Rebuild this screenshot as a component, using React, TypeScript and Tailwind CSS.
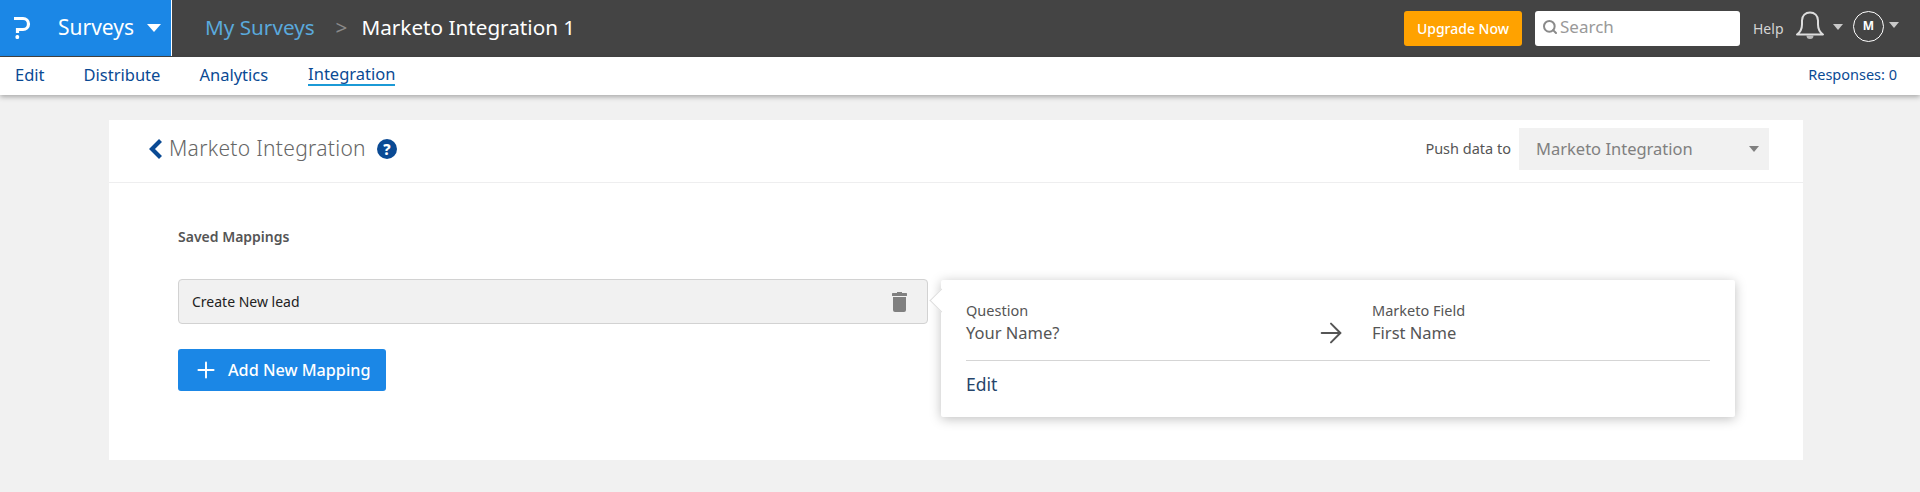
import { Search, Plus, ArrowRight } from "lucide-react";

function Caret({ className }: { className: string }) {
  return <span className={`inline-block h-0 w-0 border-x-transparent ${className}`} />;
}

function TopBar() {
  return (
    <div className="h-[57px] bg-[#444444]">
      <div className="flex h-[56px] items-stretch">
        <div className="flex w-[172px] shrink-0 items-center border-r border-white bg-[#1b87e6] text-white">
          <svg className="ml-[14px] h-[28px] w-[18px]" viewBox="0 0 18 28" fill="none">
            <path d="M0 4.500h9a5.500 5.500 0 0 1 0 11H3.500v3.500" stroke="#fff" strokeWidth="3.200" />
            <rect x="1.500" y="21" width="3.600" height="4" rx="1.500" fill="#fff" />
          </svg>
          <span className="ml-[26px] text-[21px]">Surveys</span>
          <Caret className="ml-[13px] border-x-[7px] border-t-[8px] border-t-white" />
        </div>
        <div className="ml-[33px] flex items-center text-[20.7px]">
          <span className="text-[#5aa9dc]">My Surveys</span>
          <span className="ml-[21px] mr-[14px] text-[#8a8a8a]">&gt;</span>
          <span className="text-white">Marketo Integration 1</span>
        </div>
        <div className="ml-auto flex items-center pr-[21px]">
          <button className="h-[35px] w-[118px] rounded-[3px] bg-[#ffa200] text-[14px] font-medium text-white">Upgrade Now</button>
          <div className="ml-[13px] flex h-[35px] w-[205px] items-center rounded-[3px] bg-white pl-[7px] pb-[2px] text-[#999999]">
            <Search className="h-[16px] w-[16px] text-[#8a8a8a]" strokeWidth={3} />
            <span className="ml-[2px] text-[17px]">Search</span>
          </div>
          <span className="ml-[13px] w-[31px] text-[14px] text-[#d5d5d5]">Help</span>
          <svg className="mb-[6px] ml-[11px] h-[30px] w-[30px]" viewBox="0 0 30 30" fill="none">
            <path d="M2 24.500c3.500-2.500 5-5 5-10v-4c0-5 3.500-8 8-8s8 3 8 8v4c0 5 1.500 7.500 5 10z" stroke="#dddddd" strokeWidth="2" strokeLinejoin="round" />
            <path d="M11.500 25.500a3.500 3.500 0 0 0 7 0z" fill="#bbbbbb" />
          </svg>
          <Caret className="mb-[2px] ml-[8px] border-x-[5.5px] border-t-[6px] border-t-[#c9c9c9]" />
          <div className="mb-[4px] ml-[10px] flex h-[31px] w-[31px] items-center justify-center rounded-full border border-white text-[12px] font-bold text-white">M</div>
          <Caret className="mb-[6px] ml-[5px] border-x-[5.5px] border-t-[6px] border-t-[#c9c9c9]" />
        </div>
      </div>
    </div>
  );
}

function NavBar() {
  return (
    <div className="relative flex h-[38px] items-center bg-white pb-[2px] pl-[15px] pr-[23px] text-[16.5px] text-[#0a4a94] shadow-[0_2px_5px_rgba(0,0,0,0.3)]">
      <span>Edit</span>
      <span className="ml-[39px]">Distribute</span>
      <span className="ml-[39px]">Analytics</span>
      <span className="ml-[40px] border-b-2 border-[#1b9ad6] leading-[20px]">Integration</span>
      <span className="ml-auto text-[14.5px]">Responses: 0</span>
    </div>
  );
}

function Popover() {
  return (
    <div className="relative ml-[13px] mt-[1px] h-[137px] w-[794px] rounded-[2px] bg-white px-[25px] pt-[21px] text-[#555555] shadow-[0_2px_12px_rgba(0,0,0,0.25)]">
      <span className="absolute left-[-8.5px] top-[11.5px] h-[17px] w-[17px] rotate-45 border-b border-l border-[#dddddd] bg-white" />
      <div className="flex h-[60px] items-start border-b border-[#d5d5d5]">
        <div className="w-[349px]">
          <div className="text-[14.5px] leading-[18px]">Question</div>
          <div className="mt-[3px] text-[16.5px] leading-[22px]">Your Name?</div>
        </div>
        <ArrowRight className="mt-[16px] h-[32px] w-[32px] text-[#555555]" strokeWidth={1.5} />
        <div className="ml-[25px]">
          <div className="text-[14.5px] leading-[18px]">Marketo Field</div>
          <div className="mt-[3px] text-[16.5px] leading-[22px]">First Name</div>
        </div>
      </div>
      <div className="mt-[10px] text-[17.5px] text-[#27456b]">Edit</div>
    </div>
  );
}

export default function App() {
  return (
    <div className="h-[492px] bg-[#f1f1f1] font-['Noto_Sans',sans-serif]">
      <TopBar />
      <NavBar />
      <div className="ml-[109px] mt-[25px] h-[340px] w-[1694px] bg-white">
        <div className="flex h-[63px] items-center border-b border-[#eeeeef] pb-[4px] pl-[39px] pr-[34px]">
          <svg className="h-[22px] w-[15px]" viewBox="0 0 15 22" fill="none">
            <path d="M12.500 2.500 4 11l8.500 8.500" stroke="#0a4a94" strokeWidth="4.200" />
          </svg>
          <span className="ml-[6px] text-[21px] font-light tracking-[0.3px] text-[#666666]">Marketo Integration</span>
          <span className="ml-[11px] flex h-[20px] w-[20px] items-center justify-center rounded-full bg-[#0a4a94] text-[15px] font-extrabold text-white">?</span>
          <span className="ml-auto text-[14.5px] text-[#555555]">Push data to</span>
          <div className="ml-[8px] flex h-[42px] w-[250px] items-center justify-between bg-[#f1f1f1] pl-[17px] pr-[10px] text-[16.5px] text-[#808080]">
            <span>Marketo Integration</span>
            <Caret className="border-x-[5.5px] border-t-[6px] border-t-[#808080]" />
          </div>
        </div>
        <div className="pl-[69px] pt-[45px]">
          <div className="text-[14px] font-semibold leading-[18px] text-[#555555]">Saved Mappings</div>
          <div className="mt-[33px] flex items-start">
            <div className="w-[750px]">
              <div className="flex h-[45px] items-center justify-between rounded-[4px] border border-[#d2d2d2] bg-[#f1f1f1] pl-[13px] pr-[20px] text-[14px] text-[#222222]">
                <span>Create New lead</span>
                <svg className="h-[20px] w-[15px]" viewBox="0 0 15 20" fill="#808080">
                  <rect x="5" y="0" width="5" height="2" />
                  <rect x="0" y="1" width="15" height="3" rx="0.5" />
                  <path d="M1 5h13v13a2 2 0 0 1-2 2H3a2 2 0 0 1-2-2z" />
                </svg>
              </div>
              <button className="mt-[25px] flex h-[42px] w-[208px] items-center rounded-[3px] bg-[#1b87e6] pl-[14.5px] text-[16.2px] font-medium text-white">
                <Plus className="h-[26px] w-[26px]" strokeWidth={1.8} />
                <span className="ml-[9.5px]">Add New Mapping</span>
              </button>
            </div>
            <Popover />
          </div>
        </div>
      </div>
    </div>
  );
}
